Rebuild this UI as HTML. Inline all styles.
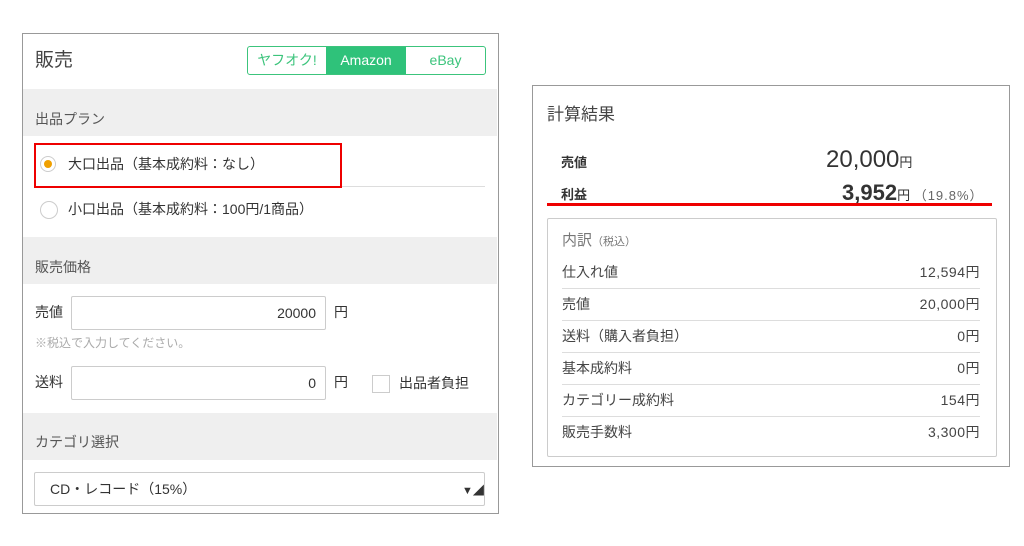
<!DOCTYPE html><html><head><meta charset="utf-8"><style>
body{margin:0;width:1024px;height:546px;background:#fff;font-family:"Liberation Sans","Noto Sans CJK JP",sans-serif;color:#333;position:relative;overflow:hidden}
.a{position:absolute;white-space:nowrap}
.gray{position:absolute;left:23px;width:474px;height:47px;background:#efefef}
.inp{position:absolute;border:1px solid #ccc;border-radius:2px;background:#fff;box-sizing:border-box}
.row{position:absolute;left:562px;width:418px;height:32px;border-bottom:1px solid #ddd;font-size:14px;color:#444;line-height:32px}
.row span{float:right;letter-spacing:0.5px}
</style></head><body>
<div class="a" style="left:22px;top:33px;width:475px;height:479px;border:1px solid #999"></div>
<div class="a" style="left:35px;top:45px;font-size:19px;color:#444">販売</div>
<div class="a" style="left:247px;top:46px;width:237px;height:27px;border:1px solid #3cc47c;border-radius:3px;display:flex;font-size:14px;line-height:27px;text-align:center;overflow:hidden">
<div style="width:78px;color:#3cc47c">ヤフオク!</div><div style="width:80px;background:#2fc27a;color:#fff">Amazon</div><div style="flex:1;color:#3cc47c">eBay</div></div>
<div class="gray" style="top:89px"></div>
<div class="a" style="left:35px;top:109px;font-size:14px;color:#555">出品プラン</div>
<div class="a" style="left:34px;top:186px;width:451px;height:1px;background:#ddd"></div>
<div class="a" style="left:34px;top:143px;width:304px;height:41px;border:2px solid #e00;background:#fff"></div>
<div class="a" style="left:40px;top:156px;width:14px;height:14px;border-radius:50%;border:1px solid #ccc;background:#fff"></div>
<div class="a" style="left:44px;top:160px;width:8px;height:8px;border-radius:50%;background:#f0a000"></div>
<div class="a" style="left:68px;top:154px;font-size:14px">大口出品（基本成約料：なし）</div>
<div class="a" style="left:40px;top:201px;width:16px;height:16px;border-radius:50%;border:1px solid #ccc"></div>
<div class="a" style="left:68px;top:199px;font-size:14px">小口出品（基本成約料：100円/1商品）</div>
<div class="gray" style="top:237px"></div>
<div class="a" style="left:35px;top:257px;font-size:14px;color:#555">販売価格</div>
<div class="a" style="left:35px;top:302px;font-size:14px">売値</div>
<div class="inp" style="left:71px;top:296px;width:255px;height:34px;font-size:14px;text-align:right;padding-right:9px;line-height:32px">20000</div>
<div class="a" style="left:334px;top:302px;font-size:14px">円</div>
<div class="a" style="left:35px;top:334px;font-size:12px;color:#aaa">※税込で入力してください。</div>
<div class="a" style="left:35px;top:372px;font-size:14px">送料</div>
<div class="inp" style="left:71px;top:366px;width:255px;height:34px;font-size:14px;text-align:right;padding-right:9px;line-height:32px">0</div>
<div class="a" style="left:334px;top:372px;font-size:14px">円</div>
<div class="a" style="left:372px;top:375px;width:16px;height:16px;border:1px solid #ccc"></div>
<div class="a" style="left:399px;top:373px;font-size:14px">出品者負担</div>
<div class="gray" style="top:413px"></div>
<div class="a" style="left:35px;top:432px;font-size:14px;color:#555">カテゴリ選択</div>
<div class="inp" style="left:34px;top:472px;width:451px;height:34px;font-size:14px;line-height:32px;padding-left:15px">CD・レコード（15%）</div>
<div class="a" style="left:462px;top:482px;font-size:11px">▼◢</div>

<div class="a" style="left:532px;top:85px;width:476px;height:380px;border:1px solid #999"></div>
<div class="a" style="left:547px;top:100px;font-size:17px;color:#444">計算結果</div>
<div class="a" style="left:561px;top:152px;font-size:13px;font-weight:bold">売値</div>
<div class="a" style="left:826px;top:146px;font-size:24px">20,000<span style="font-size:13px">円</span></div>
<div class="a" style="left:561px;top:184px;font-size:13px;font-weight:bold">利益</div>
<div class="a" style="left:842px;top:180px;font-size:22px;font-weight:bold">3,952<span style="font-size:13px;font-weight:normal">円 <span style="color:#666;letter-spacing:1px">（19.8%）</span></span></div>
<div class="a" style="left:547px;top:203px;width:445px;height:3px;background:#e00"></div>
<div class="a" style="left:547px;top:218px;width:448px;height:237px;border:1px solid #ccc;border-radius:2px"></div>
<div class="a" style="left:562px;top:229px;font-size:15px;color:#777">内訳<span style="font-size:11px">（税込）</span></div>
<div class="row" style="top:256px">仕入れ値<span>12,594円</span></div>
<div class="row" style="top:288px">売値<span>20,000円</span></div>
<div class="row" style="top:320px">送料（購入者負担）<span>0円</span></div>
<div class="row" style="top:352px">基本成約料<span>0円</span></div>
<div class="row" style="top:384px">カテゴリー成約料<span>154円</span></div>
<div class="row" style="top:416px;border:none">販売手数料<span>3,300円</span></div>
</body></html>
